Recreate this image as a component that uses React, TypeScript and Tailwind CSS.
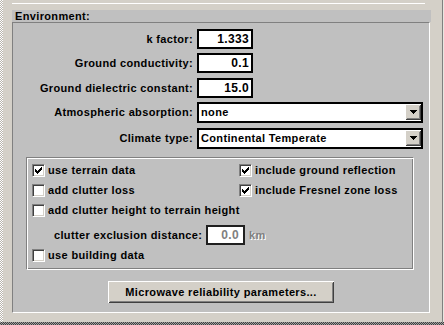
import React from 'react'

// classic win32 bevels
const raised =
  'bg-[#d4d0c8] shadow-[inset_1px_1px_0_#ffffff,inset_-1px_-1px_0_#404040,inset_2px_2px_0_#d4d0c8,inset_-2px_-2px_0_#808080]'

const CheckBox = ({ checked }: { checked?: boolean }) => (
  <span className="w-[13px] h-[13px] shrink-0 bg-white border border-t-[#808080] border-l-[#808080] border-b-white border-r-white shadow-[inset_1px_1px_0_#404040,inset_-1px_-1px_0_#d4d0c8] flex items-center justify-center">
    {checked && (
      <svg width="7" height="7" viewBox="0 0 7 7" shapeRendering="crispEdges">
        <path
          d="M0 2h1v3H0zM1 3h1v3H1zM2 4h1v3H2zM3 3h1v3H3zM4 2h1v3H4zM5 1h1v3H5zM6 0h1v3H6z"
          fill="#000"
        />
      </svg>
    )}
  </span>
)

const Check = ({ label, checked }: { label: string; checked?: boolean }) => (
  <div className="flex items-center gap-[3px]">
    <CheckBox checked={checked} />
    <span className="leading-none">{label}</span>
  </div>
)

const Field = ({ label, value, className }: { label: string; value: string; className: string }) => (
  <div className={`flex items-center h-[20px] ${className}`}>
    <span className="w-[180px] text-right leading-none">{label}</span>
    <div className="ml-[4px] w-[56px] h-[20px] bg-white border-2 border-black flex items-center justify-end pr-[2px] text-[12px] leading-none">
      {value}
    </div>
  </div>
)

const Select = ({ label, value, className }: { label: string; value: string; className: string }) => (
  <div className={`flex items-center h-[21px] ${className}`}>
    <span className="w-[180px] text-right leading-none">{label}</span>
    <div className="ml-[4px] w-[226px] h-[21px] bg-white border-2 border-black flex items-center">
      <span className="flex-1 pl-[2px] leading-none">{value}</span>
      <div className={`w-[16px] h-[16px] self-start ${raised} flex items-center justify-center`}>
        <svg width="7" height="4" viewBox="0 0 7 4" shapeRendering="crispEdges">
          <path d="M0 0h7v1H0zM1 1h5v1H1zM2 2h3v1H2zM3 3h1v1H3z" fill="#000" />
        </svg>
      </div>
    </div>
  </div>
)

export default function App() {
  return (
    <div className="w-[444px] h-[325px] bg-[#d4d0c8] flex flex-col overflow-hidden font-['Liberation_Sans',Arial,sans-serif] font-bold text-[11px] tracking-[0.35px] text-black">
      <div className="flex flex-1 min-h-0">
        <div className="w-[3px] bg-[repeating-conic-gradient(#b8b4ac_0%_25%,#ffffff_0%_50%)] bg-size-[2px_2px]" />
        <div className="w-[9px]" />

        <div className="w-[419px] flex flex-col">
          <div className="h-[3px]" />
          <div className="h-px bg-white mr-[6px]" />
          <div className="h-[6px]" />
          <div className="h-[12px] bg-[#c0c0c0] flex items-center pl-[3px] leading-none">Environment:</div>

          {/* main sunken panel */}
          <div className="h-[291px] w-[418px] bg-[#c0c0c0] border border-t-[#808080] border-l-[#808080] border-b-white border-r-white flex flex-col">
            <Field label="k factor:" value="1.333" className="mt-[6px]" />
            <Field label="Ground conductivity:" value="0.1" className="mt-[4px]" />
            <Field label="Ground dielectric constant:" value="15.0" className="mt-[5px]" />
            <Select label="Atmospheric absorption:" value="none" className="mt-[4px]" />
            <Select label="Climate type:" value="Continental Temperate" className="mt-[5px]" />

            {/* options group */}
            <div className="mt-[8px] ml-[13px] w-[388px] h-[113px] border border-t-[#808080] border-l-[#808080] border-b-white border-r-white shadow-[inset_1px_1px_0_#ffffff,inset_-1px_-1px_0_#808080] flex flex-col pt-[2px] pl-[5px]">
              <div className="flex items-center h-[20px]">
                <div className="w-[207px]">
                  <Check label="use terrain data" checked />
                </div>
                <Check label="include ground reflection" checked />
              </div>
              <div className="flex items-center h-[20px]">
                <div className="w-[207px]">
                  <Check label="add clutter loss" />
                </div>
                <Check label="include Fresnel zone loss" checked />
              </div>
              <div className="flex items-center h-[20px]">
                <Check label="add clutter height to terrain height" />
              </div>
              <div className="flex items-center h-[20px] mt-[5px] pl-[22px]">
                <span className="w-[152px] leading-none">clutter exclusion distance:</span>
                <div className="w-[39px] h-[20px] bg-white border-2 border-[#202020] flex items-center justify-end pr-[4px] text-[12px] text-[#808080] leading-none">
                  0.0
                </div>
                <span className="ml-[4px] text-[#808080] [text-shadow:1px_1px_0_#ffffff] leading-none">km</span>
              </div>
              <div className="flex items-center h-[20px]">
                <Check label="use building data" />
              </div>
            </div>

            <div className="flex justify-center mt-[11px]">
              <div className={`w-[226px] h-[22px] ${raised} flex items-center justify-center leading-none`}>
                Microwave reliability parameters...
              </div>
            </div>
          </div>
        </div>

        <div className="flex-1" />
        <div className="w-px bg-[#808080]" />
        <div className="w-px bg-[#e8e6e0]" />
      </div>
      <div className="h-[3px] bg-[repeating-conic-gradient(#404040_0%_25%,#a0a0a0_0%_50%)] bg-size-[2px_2px]" />
    </div>
  )
}
